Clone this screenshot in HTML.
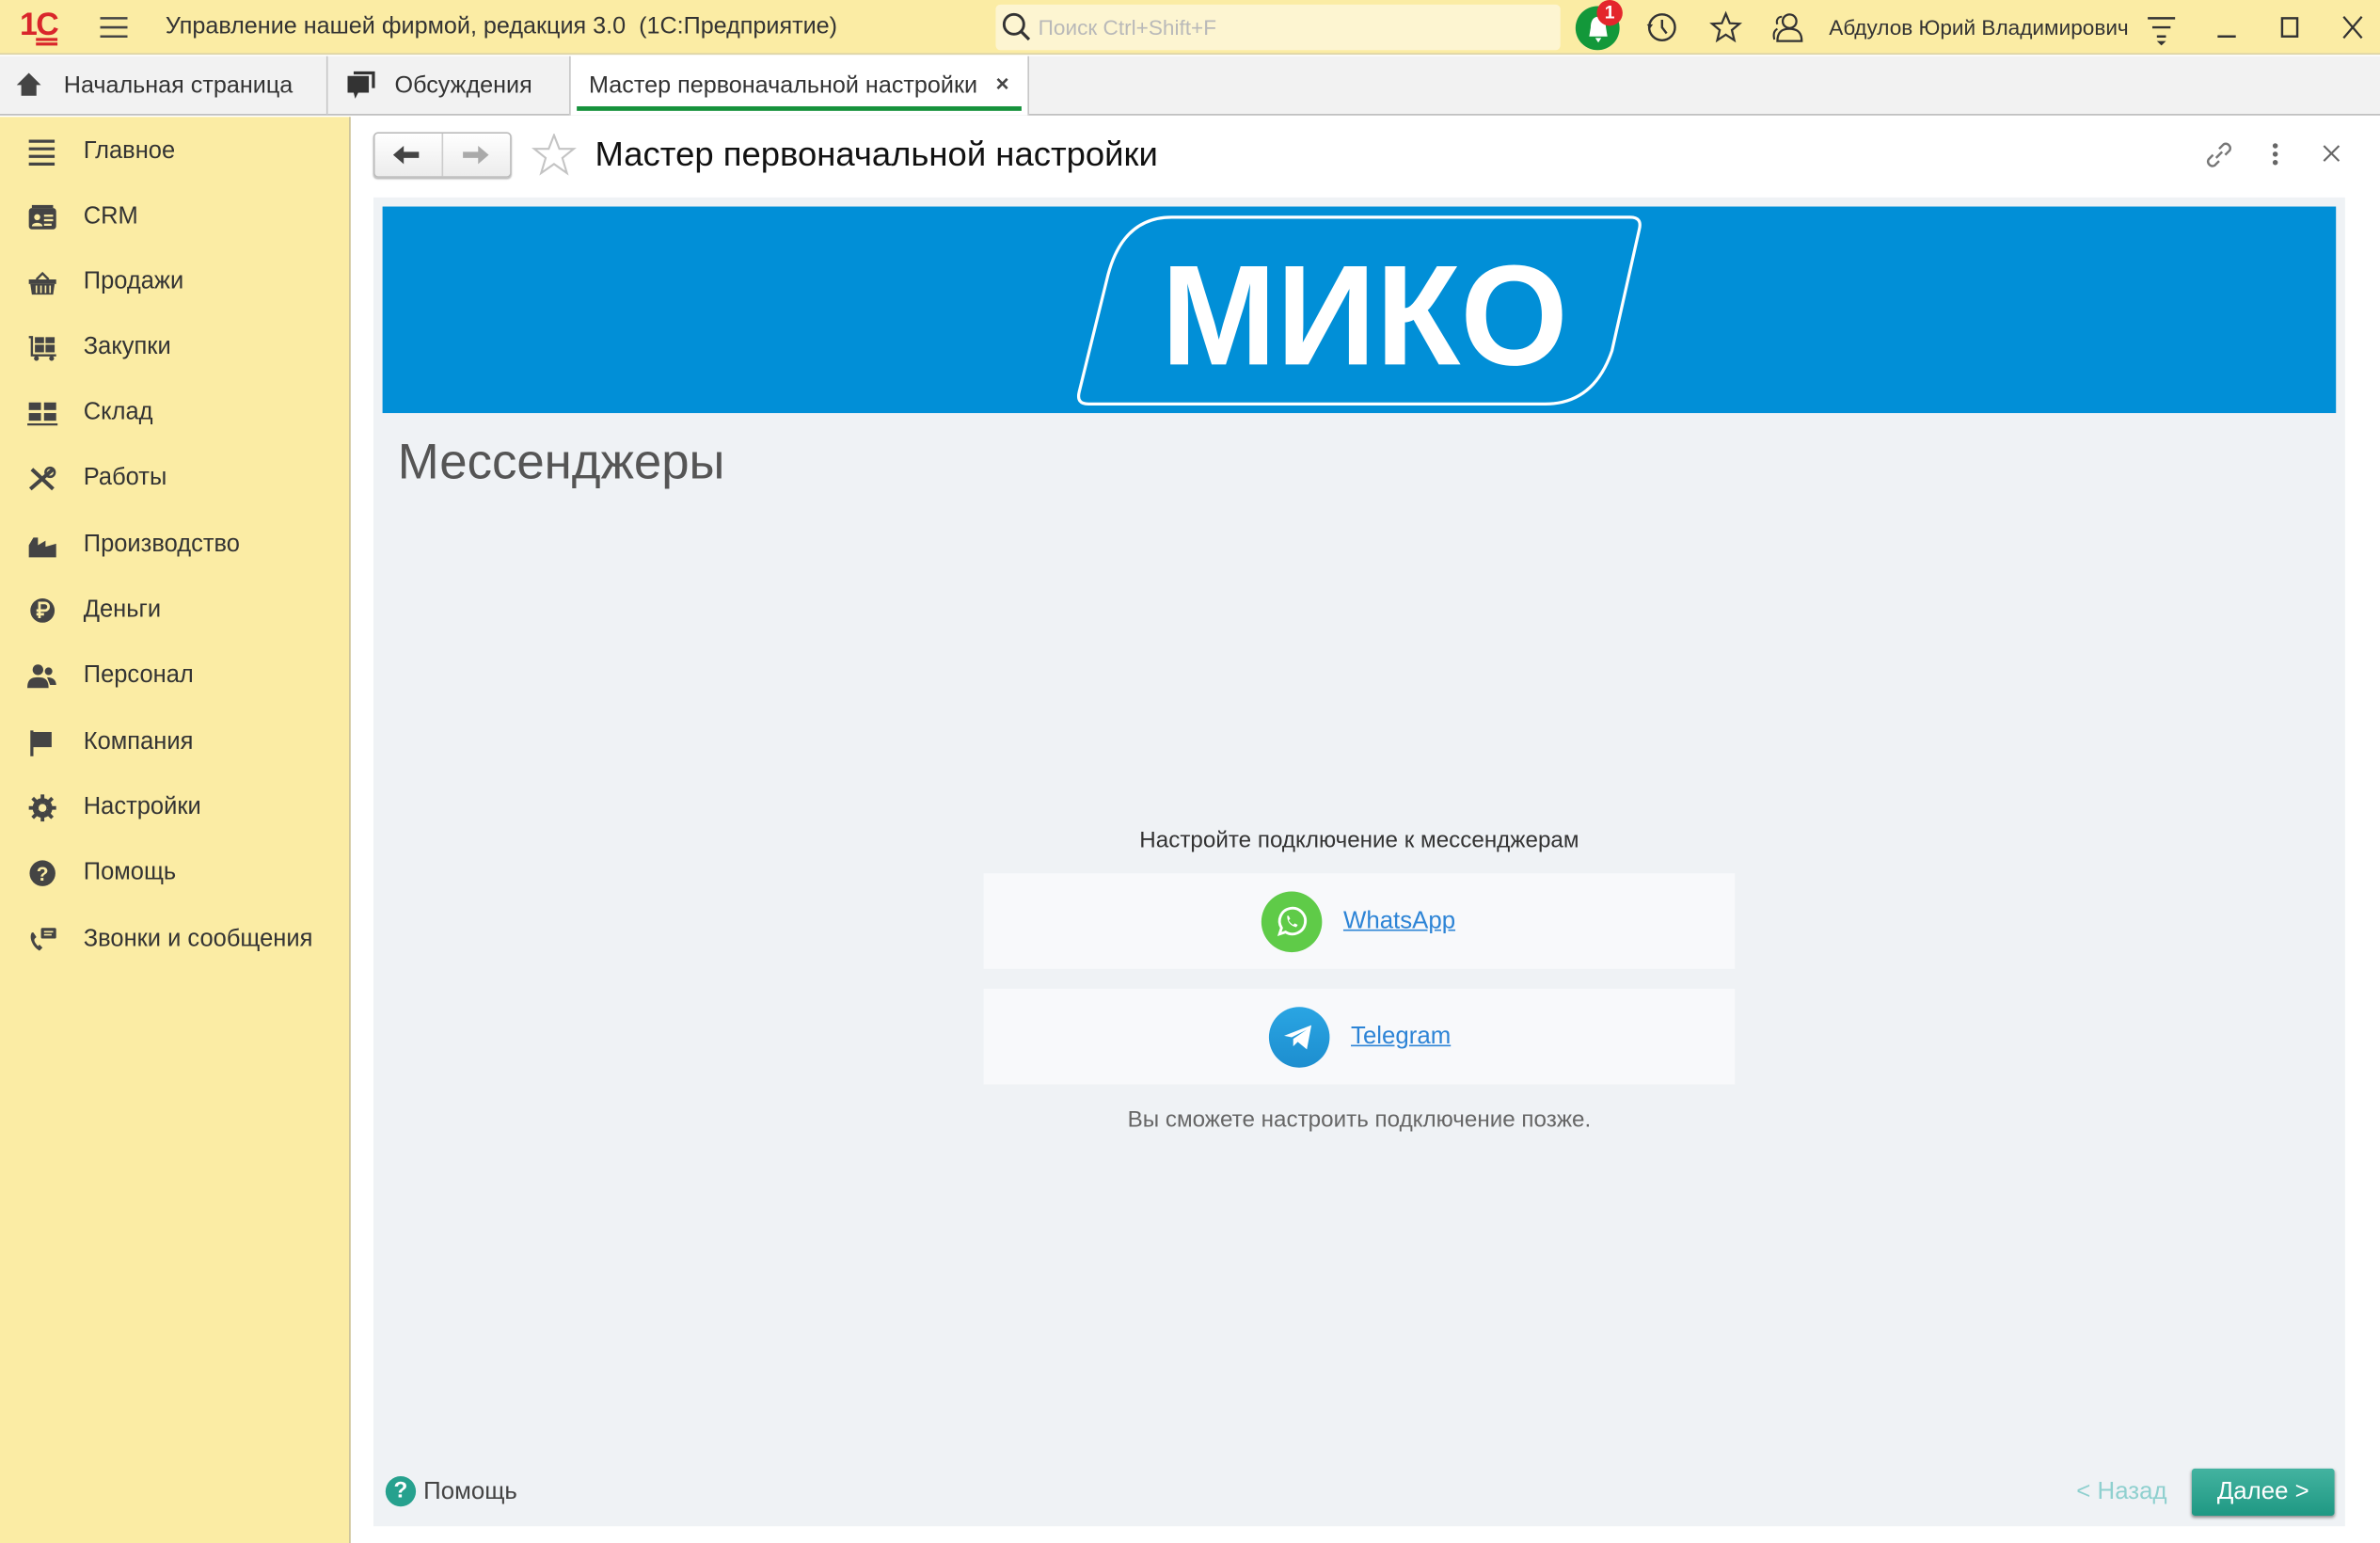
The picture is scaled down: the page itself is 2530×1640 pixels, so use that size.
<!DOCTYPE html>
<html><head><meta charset="utf-8"><style>
*{margin:0;padding:0;box-sizing:border-box}
html,body{width:2530px;height:1640px;overflow:hidden;background:#fff}
#w{position:absolute;left:0;top:0;width:1568px;height:1016px;transform:scale(1.61352,1.61417);transform-origin:0 0;font-family:"Liberation Sans",sans-serif;color:#333}
.a{position:absolute}
.t{white-space:nowrap}
.side .it{position:absolute;left:18px;height:20px}
.side .it span{position:absolute;left:37px;top:0;font-size:15.8px;color:#333;white-space:nowrap;line-height:20px}
.side svg{position:absolute;left:0;top:1px}
</style></head><body><div id="w">
<!-- top bar -->
<div class="a" style="left:0;top:0;width:1568px;height:36px;background:#fbeca4;border-bottom:1px solid #d9d1a7"></div>
<div class="a t" style="left:13px;top:5px;font-size:21px;font-weight:bold;color:#d9262b;letter-spacing:-1px">1<span style="text-decoration:underline double">С</span></div>
<svg class="a" style="left:66px;top:10px" width="18" height="16"><path d="M0 2H18M0 8H18M0 14H18" stroke="#444" stroke-width="1.6"/></svg>
<div class="a t" style="left:109px;top:9px;font-size:15.6px;color:#333">Управление нашей фирмой, редакция 3.0&nbsp; (1С:Предприятие)</div>
<div class="a" style="left:656px;top:3px;width:372px;height:30px;background:#fdf5d1;border-radius:3px"></div>
<svg class="a" style="left:660px;top:8px" width="20" height="20"><circle cx="8" cy="8" r="6.5" fill="none" stroke="#333" stroke-width="1.8"/><path d="M13 13L18 18" stroke="#333" stroke-width="2"/></svg>
<div class="a t" style="left:684px;top:10px;font-size:14px;color:#b9b9b9">Поиск Ctrl+Shift+F</div>
<div class="a" style="left:1038px;top:4px;width:29px;height:29px;border-radius:50%;background:#13983a"></div>
<svg class="a" style="left:1043px;top:9px" width="20" height="20"><path d="M10 2C6 2 5 6 5 9L4 15H16L15 9C15 6 14 2 10 2Z M8 16H12L10 19Z" fill="#fff"/></svg>
<div class="a" style="left:1052px;top:0;width:17px;height:17px;border-radius:50%;background:#e4262c;color:#fff;font-size:12px;font-weight:bold;text-align:center;line-height:17px">1</div>
<svg class="a" style="left:1084px;top:7px" width="22" height="22"><circle cx="11" cy="11" r="8.5" fill="none" stroke="#333" stroke-width="1.5"/><path d="M11 6V11L14 15" stroke="#333" stroke-width="1.5" fill="none"/><path d="M1 9L3 12L5 9Z" fill="#333"/></svg>
<svg class="a" style="left:1126px;top:7px" width="22" height="22"><path d="M11 2L13.6 8.3L20 8.6L15 12.8L16.6 19.5L11 15.8L5.4 19.5L7 12.8L2 8.6L8.4 8.3Z" fill="none" stroke="#333" stroke-width="1.4"/></svg>
<svg class="a" style="left:1166px;top:7px" width="24" height="22"><circle cx="13" cy="7" r="4.5" fill="none" stroke="#333" stroke-width="1.4"/><path d="M5 20C5 14 8 12 13 12C18 12 21 14 21 20Z" fill="none" stroke="#333" stroke-width="1.4"/><path d="M8 4C5 4 4 7 5 9M3 19C2 15 3 13 5 12" fill="none" stroke="#333" stroke-width="1.3"/></svg>
<div class="a t" style="left:1205px;top:10px;font-size:14px;color:#333">Абдулов Юрий Владимирович</div>
<svg class="a" style="left:1414px;top:10px" width="20" height="20"><path d="M1 2H19M4 8H16M7 14H13" stroke="#333" stroke-width="1.5"/><path d="M7 17H13L10 20Z" fill="#333"/></svg>
<svg class="a" style="left:1460px;top:10px" width="14" height="16"><path d="M1 14H13" stroke="#333" stroke-width="1.5"/></svg>
<svg class="a" style="left:1502px;top:10px" width="14" height="16"><rect x="1.5" y="2" width="10" height="12" fill="none" stroke="#333" stroke-width="1.5"/></svg>
<svg class="a" style="left:1542px;top:10px" width="16" height="16"><path d="M2 1L14 15M14 1L2 15" stroke="#333" stroke-width="1.4"/></svg>

<!-- tabs -->
<div class="a" style="left:0;top:37px;width:1568px;height:39px;background:#f2f2f2;border-bottom:1px solid #bcbcbc"></div>
<svg class="a" style="left:10px;top:47px" width="18" height="18"><path d="M9 1L1 9H4V16H14V9H17Z" fill="#444"/></svg>
<div class="a t" style="left:42px;top:48px;font-size:15.6px">Начальная страница</div>
<div class="a" style="left:215px;top:37px;width:1px;height:39px;background:#c7c7c7"></div>
<svg class="a" style="left:228px;top:46px" width="20" height="22"><path d="M5 1H19V12H17V3H5Z" fill="#333"/><path d="M1 4H15V15H8L6 19L5 15H1Z" fill="#333"/></svg>
<div class="a t" style="left:260px;top:48px;font-size:15.6px">Обсуждения</div>
<div class="a" style="left:375px;top:37px;width:303px;height:39px;background:#fff;border-left:1px solid #c7c7c7;border-right:1px solid #c7c7c7"></div>
<div class="a t" style="left:388px;top:48px;font-size:15.6px">Мастер первоначальной настройки</div>
<div class="a t" style="left:656px;top:47px;font-size:15px;font-weight:bold;color:#444">×</div>
<div class="a" style="left:380px;top:70px;width:293px;height:3px;background:#16923c"></div>

<!-- sidebar -->
<div class="a side" style="left:0;top:77px;width:231px;height:939px;background:#fbeca4;border-right:1px solid #c9c29e">
 <div class="it" style="top:13px"><svg width="20" height="18"><path d="M1 2H18M1 7H18M1 12H18M1 17H18" stroke="#444" stroke-width="2"/></svg><span>Главное</span></div>
 <div class="it" style="top:56px"><svg width="20" height="18"><rect x="1" y="3" width="18" height="14" rx="2" fill="#444"/><rect x="3" y="1" width="14" height="2" fill="#444"/><circle cx="6.5" cy="9" r="2" fill="#fbeca4"/><path d="M3 15C3 12 10 12 10 15Z" fill="#fbeca4"/><path d="M11 8H17M11 11H17M11 14H16" stroke="#fbeca4" stroke-width="1.4"/></svg><span>CRM</span></div>
 <div class="it" style="top:99px"><svg width="20" height="18"><path d="M6 7L10 3L14 7" stroke="#444" stroke-width="1.5" fill="none"/><rect x="1" y="7" width="18" height="3" fill="#444"/><path d="M2 10H18L17 17H3Z" fill="#444"/><path d="M6 11V16M9 11V16M12 11V16M15 11V16" stroke="#fbeca4" stroke-width="1"/></svg><span>Продажи</span></div>
 <div class="it" style="top:142px"><svg width="20" height="18"><path d="M1 2H3V14H19" stroke="#444" stroke-width="1.5" fill="none"/><rect x="5" y="2" width="6" height="4" fill="#444"/><rect x="12" y="2" width="6" height="4" fill="#444"/><rect x="5" y="7" width="6" height="5" fill="#444"/><rect x="12" y="7" width="6" height="5" fill="#444"/><circle cx="6" cy="16" r="1.6" fill="#444"/><circle cx="16" cy="16" r="1.6" fill="#444"/></svg><span>Закупки</span></div>
 <div class="it" style="top:185px"><svg width="20" height="18"><rect x="1" y="2" width="8" height="5" fill="#444"/><rect x="11" y="2" width="8" height="5" fill="#444"/><rect x="1" y="9" width="8" height="5" fill="#444"/><rect x="11" y="9" width="8" height="5" fill="#444"/><path d="M0 16.5H20" stroke="#444" stroke-width="1.4"/></svg><span>Склад</span></div>
 <div class="it" style="top:228px"><svg width="20" height="18"><path d="M2 16L17 3M3 3L17 16" stroke="#444" stroke-width="2.5"/><circle cx="15" cy="5" r="3" fill="none" stroke="#444" stroke-width="1.6"/></svg><span>Работы</span></div>
 <div class="it" style="top:272px"><svg width="20" height="18"><path d="M1 17V9L4 4H7V9L12 6V10L19 8V17Z" fill="#444"/></svg><span>Производство</span></div>
 <div class="it" style="top:315px"><svg width="20" height="18"><circle cx="10" cy="9" r="8" fill="#444"/><path d="M8 14V4H11.5A2.5 2.5 0 0 1 11.5 9H6M6 11.5H11" stroke="#fbeca4" stroke-width="1.7" fill="none"/></svg><span>Деньги</span></div>
 <div class="it" style="top:358px"><svg width="20" height="18"><circle cx="7" cy="5" r="3.5" fill="#444"/><path d="M0 17C0 11 3 10 7 10C11 10 14 11 14 17Z" fill="#444"/><circle cx="14" cy="6" r="2.5" fill="#444"/><path d="M13 10C17 10 19 12 19 15H15" fill="#444"/></svg><span>Персонал</span></div>
 <div class="it" style="top:402px"><svg width="20" height="18"><path d="M3 1V18" stroke="#444" stroke-width="2"/><path d="M4 2H16V12H4Z" fill="#444"/></svg><span>Компания</span></div>
 <div class="it" style="top:445px"><svg width="20" height="18"><circle cx="10" cy="9" r="5" fill="none" stroke="#444" stroke-width="3"/><path d="M10 0V18M1 9H19M3.5 2.5L16.5 15.5M16.5 2.5L3.5 15.5" stroke="#444" stroke-width="2.4"/><circle cx="10" cy="9" r="2.6" fill="#fbeca4"/></svg><span>Настройки</span></div>
 <div class="it" style="top:488px"><svg width="20" height="18"><circle cx="10" cy="9" r="8.5" fill="#444"/><text x="10" y="14" text-anchor="middle" font-size="13" font-weight="bold" fill="#fbeca4" font-family="Liberation Sans">?</text></svg><span>Помощь</span></div>
 <div class="it" style="top:532px"><svg width="20" height="18"><rect x="9" y="1" width="10" height="7" rx="1" fill="#444"/><path d="M11 3.5H17M11 5.5H16" stroke="#fbeca4" stroke-width="1"/><path d="M3 4C1 7 3 13 8 16L10 14L8 12L7 13C5 11 4 9 5 8L6 7L4 4Z" fill="#444"/></svg><span>Звонки и сообщения</span></div>
</div>

<!-- form header -->
<div class="a" style="left:246px;top:87px;width:91px;height:30px;border:1px solid #bbb;border-radius:3px;background:linear-gradient(#fff,#ececec);box-shadow:0 1px 1px #bbb"></div>
<div class="a" style="left:291px;top:88px;width:1px;height:28px;background:#ccc"></div>
<svg class="a" style="left:258px;top:94px" width="20" height="16"><path d="M1 8L8 2V6H18V10H8V14Z" fill="#444"/></svg>
<svg class="a" style="left:303px;top:94px" width="20" height="16"><path d="M19 8L12 2V6H2V10H12V14Z" fill="#aaa"/></svg>
<svg class="a" style="left:350px;top:88px" width="30" height="28"><path d="M15 1L18.5 10H28L20.5 16L23.5 26L15 20L6.5 26L9.5 16L2 10H11.5Z" fill="none" stroke="#c4c4c4" stroke-width="1.3"/></svg>
<div class="a t" style="left:392px;top:89px;font-size:22.6px;color:#111">Мастер первоначальной настройки</div>
<svg class="a" style="left:1450px;top:90px" width="24" height="24"><path d="M10 14L14 10M8 12L5 15A3 3 0 0 0 9 19L12 16M12 8L15 5A3 3 0 0 1 19 9L16 12" fill="none" stroke="#777" stroke-width="1.5"/></svg>
<svg class="a" style="left:1495px;top:93px" width="8" height="18"><circle cx="4" cy="3" r="1.7" fill="#666"/><circle cx="4" cy="8.5" r="1.7" fill="#666"/><circle cx="4" cy="14" r="1.7" fill="#666"/></svg>
<svg class="a" style="left:1530px;top:95px" width="12" height="12"><path d="M1 1L11 11M11 1L1 11" stroke="#666" stroke-width="1.3"/></svg>

<!-- form body -->
<div class="a" style="left:246px;top:130px;width:1299px;height:875px;background:#eff2f5"></div>
<div class="a" style="left:252px;top:136px;width:1287px;height:136px;background:#018fd7"></div>
<svg class="a" style="left:700px;top:136px" width="400" height="136">
 <path d="M72 7H374Q382 7 380 15L362 95Q350 130 318 130H17Q9 130 11 122L30 45Q40 7 72 7Z" fill="none" stroke="#fff" stroke-width="2"/>
 <text x="65" y="104" font-family="Liberation Sans" font-weight="bold" font-size="94" fill="#fff" textLength="268" lengthAdjust="spacingAndGlyphs">МИКО</text>
</svg>
<div class="a t" style="left:262px;top:285px;font-size:32.7px;color:#555">Мессенджеры</div>

<div class="a t" style="left:648px;top:545px;width:495px;text-align:center;font-size:15px;color:#333">Настройте подключение к мессенджерам</div>
<div class="a" style="left:648px;top:575px;width:495px;height:63px;background:#f8f9fb"></div>
<div class="a" style="left:831px;top:587px;width:40px;height:40px;border-radius:50%;background:#5fcb48"></div>
<svg class="a" style="left:839px;top:595px" width="24" height="24"><path d="M4 20L5.3 16A8.5 8.5 0 1 1 8 18.7Z" fill="none" stroke="#fff" stroke-width="1.8"/><path d="M9 8C9 12 11 14.5 15 15.5L16 14L14 13L13 14C11.5 13.2 10.5 12 10 11L11 10L10 8Z" fill="#fff"/></svg>
<div class="a t" style="left:885px;top:598px;font-size:16px;color:#2d84d6;text-decoration:underline">WhatsApp</div>
<div class="a" style="left:648px;top:651px;width:495px;height:63px;background:#f8f9fb"></div>
<div class="a" style="left:836px;top:663px;width:40px;height:40px;border-radius:50%;background:linear-gradient(#2aa5e3,#1d8ecf)"></div>
<svg class="a" style="left:843px;top:671px" width="26" height="24"><path d="M3 11L21 4L18 20L12 15L9 18L9 13L18 7L8 12Z" fill="#fff"/></svg>
<div class="a t" style="left:890px;top:674px;font-size:16px;color:#2d84d6;text-decoration:underline">Telegram</div>
<div class="a t" style="left:648px;top:729px;width:495px;text-align:center;font-size:15px;color:#666">Вы сможете настроить подключение позже.</div>

<div class="a" style="left:254px;top:972px;width:20px;height:20px;border-radius:50%;background:#26a18e;color:#fff;font-weight:bold;font-size:15px;text-align:center;line-height:20px">?</div>
<div class="a t" style="left:279px;top:974px;font-size:16px;color:#444">Помощь</div>
<div class="a t" style="left:1368px;top:974px;font-size:16px;color:#8fd0cf">&lt; Назад</div>
<div class="a" style="left:1444px;top:967px;width:94px;height:31px;border-radius:2px;background:linear-gradient(#43b3a0,#1f9883);box-shadow:0 1px 2px #888;color:#fff;font-size:16px;text-align:center;line-height:31px">Далее &gt;</div>
</div></body></html>
